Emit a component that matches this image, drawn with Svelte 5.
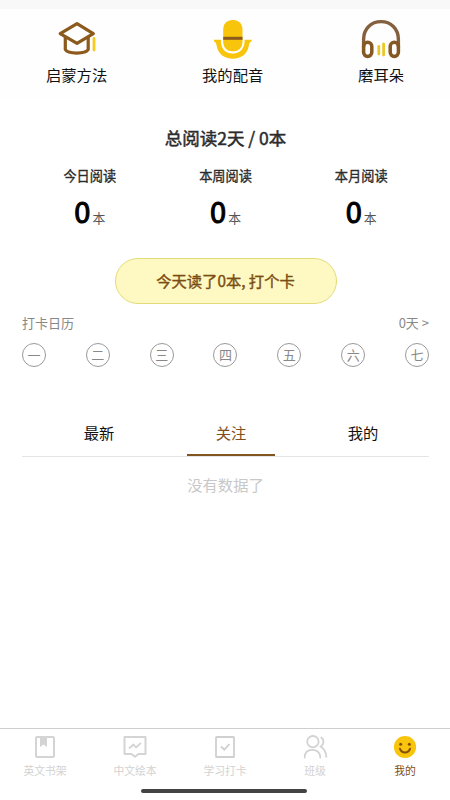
<script>
  const stats = ['今日阅读', '本周阅读', '本月阅读'];
  const days = ['一', '二', '三', '四', '五', '六', '七'];
  const tabs = ['最新', '关注', '我的'];
  let active = $state(1);
</script>

<div class="screen">
  <div class="status"></div>
  <header>
    <div class="entry">
      <svg width="44" height="44" viewBox="0 0 44 44" fill="none" stroke-linejoin="round" stroke-linecap="round">
        <path d="M10.3 18V30.5C13 35.2 30.5 35.2 33.2 30.5V18" stroke="#8b5a1c" stroke-width="3.2" />
        <path d="M22 4.6L38.3 14.6L22 24.4L5.2 14.6Z" fill="#fff" stroke="#8b5a1c" stroke-width="3.2" />
        <path d="M39 19.5V31" stroke="#f6cb20" stroke-width="2.8" />
      </svg>
      <span>启蒙方法</span>
    </div>
    <div class="entry">
      <svg width="44" height="44" viewBox="0 0 44 44" fill="none">
        <path d="M2.7 20.8H10.5C9.5 30 14 34.4 21.7 34.4S33.5 30 32.7 20.8H40.8L40.3 22.8C38.4 23.3 38.2 24.5 37.8 27C36.2 35.2 30.2 39.7 21.8 39.7S7.3 35.2 5.7 27C5.2 24.5 5 23.3 3.2 22.8Z" fill="#f8c50c" />
        <rect x="10" y="-1" width="23.6" height="35.3" rx="11.8" fill="#fefefe" />
        <rect x="12.2" y="1" width="19.3" height="31.3" rx="8.7" fill="#f8c50c" />
        <path d="M12.2 19.3H31.5" stroke="#8b5a1c" stroke-width="3" />
      </svg>
      <span>我的配音</span>
    </div>
    <div class="entry">
      <svg width="44" height="44" viewBox="0 0 44 44" fill="none" stroke="#85603f" stroke-width="3.4">
        <path d="M4.6 28V20.5C4.6 9.5 12.2 2.6 22 2.6S39.4 9.5 39.4 20.5V28" />
        <rect x="4.6" y="23.2" width="8.2" height="14.2" rx="4.1" stroke="#855824" stroke-width="3.5" />
        <rect x="31.2" y="23.2" width="8.2" height="14.2" rx="4.1" stroke="#855824" stroke-width="3.5" />
        <path d="M19.8 27.5V35M24.6 25V36" stroke="#eac82c" stroke-width="2.8" stroke-linecap="round" />
      </svg>
      <span>磨耳朵</span>
    </div>
  </header>

  <main>
    <h1>总阅读2天 / 0本</h1>
    <div class="stats">
      {#each stats as label}
        <div class="stat">
          <div class="label">{label}</div>
          <div class="value"><b>0</b><span>本</span></div>
        </div>
      {/each}
    </div>
    <button class="checkin">今天读了0本, 打个卡</button>
    <div class="calendar"><span>打卡日历</span><span>0天 &gt;</span></div>
    <div class="days">
      {#each days as day}<span>{day}</span>{/each}
    </div>
    <div class="tabs">
      {#each tabs as tab, i}
        <button class:active={active === i} onclick={() => (active = i)}>{tab}</button>
      {/each}
    </div>
    <p class="empty">没有数据了</p>
  </main>

  <nav>
    <div class="item">
      <svg width="26" height="26" viewBox="0 0 26 26" fill="none" stroke="#d4d4d4" stroke-width="2">
        <rect x="4" y="3" width="18" height="20" rx="1" />
        <path d="M8 3H15V13L11.5 10.5L8 13Z" fill="#d4d4d4" stroke="none" />
      </svg>
      <span>英文书架</span>
    </div>
    <div class="item">
      <svg width="26" height="26" viewBox="0 0 26 26" fill="none" stroke="#d4d4d4" stroke-width="2" stroke-linejoin="round">
        <path d="M2.5 3H23.5V20H16.5L13 22.8L9.5 20H2.5Z" />
        <path d="M7 14.5L11.5 10.5L14 13.5L19 8.8" stroke-width="1.8" />
      </svg>
      <span>中文绘本</span>
    </div>
    <div class="item">
      <svg width="26" height="26" viewBox="0 0 26 26" fill="none" stroke="#d0d0d0" stroke-width="1.8">
        <rect x="4" y="3" width="18" height="20" rx=".6" />
        <path d="M9 12.5L12.3 15.7L17.5 10" />
      </svg>
      <span>学习打卡</span>
    </div>
    <div class="item">
      <svg width="26" height="26" viewBox="0 0 26 26" fill="none" stroke="#d2d2d2" stroke-width="1.8" stroke-linecap="round">
        <circle cx="10.9" cy="7.7" r="5.7" />
        <path d="M2.7 23.5C2.7 18.5 5.7 15.8 10.3 15.8S18 18.5 18.3 23.5M19.3 3.5C22.3 5.5 22.3 10.3 18.8 12.8C22.3 14.8 24 18 24.3 22.7" />
      </svg>
      <span>班级</span>
    </div>
    <div class="item current">
      <svg width="26" height="26" viewBox="0 0 26 26" fill="none">
        <circle cx="13" cy="13" r="11.1" fill="#f8c50c" />
        <circle cx="8.7" cy="10.2" r="1.5" fill="#85500f" />
        <circle cx="17.3" cy="10.2" r="1.5" fill="#85500f" />
        <path d="M8 14.8C10 19.7 16 19.7 18 14.8" stroke="#85500f" stroke-width="2" stroke-linecap="round" />
      </svg>
      <span>我的</span>
    </div>
  </nav>
  <div class="home"></div>
</div>

<style>
  .screen {
    position: relative;
    display: flex;
    flex-direction: column;
    width: 450px;
    height: 800px;
    overflow: hidden;
    background: #fff;
    color: #111;
    font-family: 'Noto Sans CJK SC', sans-serif;
  }
  .status {
    height: 9px;
    background: #f8f8f8;
  }
  header {
    display: flex;
    justify-content: space-between;
    box-sizing: border-box;
    height: 89px;
    padding: 10px 46px 0;
    background: #fefefe;
  }
  .entry {
    display: flex;
    flex-direction: column;
    align-items: center;
  }
  .entry span {
    font-size: 15.3px;
    line-height: 22px;
  }
  main {
    display: flex;
    flex-direction: column;
    flex: 1;
    padding: 0 21px 0 22px;
  }
  h1 {
    margin: 27px 0 0;
    text-align: center;
    font-size: 17.5px;
    font-weight: 400;
    line-height: 26px;
    color: #2c2c2c;
    -webkit-text-stroke: 0.5px;
  }
  .stats {
    display: flex;
    justify-content: space-between;
    margin-top: 15px;
  }
  .stat {
    width: 135.6px;
    text-align: center;
  }
  .label {
    font-size: 13.2px;
    line-height: 20px;
    color: #2c2c2c;
    -webkit-text-stroke: 0.35px;
  }
  .value {
    display: flex;
    justify-content: center;
    align-items: baseline;
    gap: 2px;
    height: 46px;
    margin-top: 1px;
    line-height: 46px;
  }
  .value b {
    font-size: 29px;
    font-weight: 400;
    color: #000;
    -webkit-text-stroke: 1.1px;
  }
  .value span {
    font-size: 12.8px;
    color: #555;
  }
  button {
    padding: 0;
    border: 0;
    background: none;
    font-family: inherit;
  }
  .checkin {
    box-sizing: border-box;
    align-self: center;
    width: 222px;
    height: 46px;
    margin-top: 25px;
    padding-bottom: 2px;
    border: 1px solid #e2dc78;
    border-radius: 23px;
    background: #fef9c3;
    color: #7c4d12;
    font-size: 15.3px;
    -webkit-text-stroke: 0.4px;
  }
  .calendar {
    display: flex;
    justify-content: space-between;
    margin-top: 9px;
    font-size: 13px;
    line-height: 20px;
    color: #888;
  }
  .days {
    display: flex;
    justify-content: space-between;
    margin-top: 10px;
  }
  .days span {
    box-sizing: border-box;
    width: 24px;
    height: 24px;
    border: 1px solid #999;
    border-radius: 50%;
    text-align: center;
    font-size: 13px;
    line-height: 21px;
    color: #888;
  }
  .tabs {
    display: flex;
    gap: 44px;
    box-sizing: border-box;
    height: 47px;
    margin-top: 43px;
    padding-left: 33px;
    border-bottom: 1px solid #e5e5e5;
  }
  .tabs button {
    box-sizing: border-box;
    width: 88px;
    height: 46px;
    border-bottom: 2px solid transparent;
    font-size: 15.3px;
    color: #111;
  }
  .tabs .active {
    border-color: #80551f;
    color: #80501a;
  }
  .empty {
    margin: 16px 0 0;
    text-align: center;
    font-size: 15.3px;
    line-height: 22px;
    color: #c8c8c8;
  }
  nav {
    display: flex;
    box-sizing: border-box;
    height: 72px;
    padding-top: 5px;
    border-top: 1px solid #cfcfcf;
  }
  .item {
    display: flex;
    flex: 1;
    flex-direction: column;
    align-items: center;
    color: #d2d2d2;
  }
  .item span {
    margin-top: 2px;
    font-size: 10.8px;
    line-height: 16px;
  }
  .current {
    color: #80501a;
  }
  .home {
    position: absolute;
    left: 141px;
    bottom: 7px;
    width: 166px;
    height: 4px;
    border-radius: 2px;
    background: #444;
  }
</style>
